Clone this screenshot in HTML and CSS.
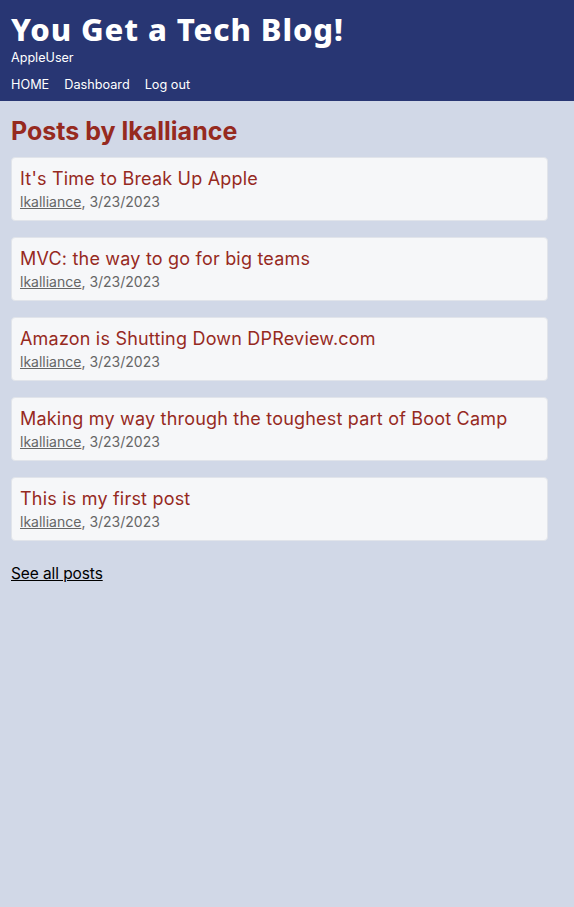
FILE: index.html
```html
<!DOCTYPE html>
<html>
<head>
<meta charset="utf-8">
<link rel="stylesheet" href="styles.css">
</head>
<body>
<header class="site-header">
  <h1 class="site-title">You Get a Tech Blog!</h1>
  <div class="user">AppleUser</div>
  <nav class="nav">
    <a href="#">HOME</a>
    <a href="#">Dashboard</a>
    <a href="#">Log out</a>
  </nav>
</header>
<main class="main">
  <h2 class="page-title">Posts by lkalliance</h2>
  <div class="posts">
    <div class="card">
      <div class="card-title">It's Time to Break Up Apple</div>
      <div class="meta"><a href="#">lkalliance</a>, 3/23/2023</div>
    </div>
    <div class="card">
      <div class="card-title">MVC: the way to go for big teams</div>
      <div class="meta"><a href="#">lkalliance</a>, 3/23/2023</div>
    </div>
    <div class="card">
      <div class="card-title">Amazon is Shutting Down DPReview.com</div>
      <div class="meta"><a href="#">lkalliance</a>, 3/23/2023</div>
    </div>
    <div class="card">
      <div class="card-title">Making my way through the toughest part of Boot Camp</div>
      <div class="meta"><a href="#">lkalliance</a>, 3/23/2023</div>
    </div>
    <div class="card">
      <div class="card-title">This is my first post</div>
      <div class="meta"><a href="#">lkalliance</a>, 3/23/2023</div>
    </div>
  </div>
  <a class="see-all" href="#">See all posts</a>
</main>
</body>
</html>
```
FILE: styles.css
```css
html, body {
  margin: 0;
  padding: 0;
  background: #d1d8e7;
  font-family: Inter, "Noto Sans", sans-serif;
}
.site-header {
  background: #283673;
  color: #fff;
  padding: 12px 11px 0;
  height: 89px;
}
.site-title {
  margin: 0;
  font-family: "Noto Sans", sans-serif;
  font-weight: 800;
  font-size: 31px;
  line-height: 34px;
  letter-spacing: 0.9px;
}
.user {
  font-size: 12.6px;
  line-height: 16px;
  margin-top: 4px;
}
.nav {
  display: flex;
  gap: 15px;
  margin-top: 11px;
}
.nav a {
  color: #fff;
  text-decoration: none;
  font-size: 12.7px;
  line-height: 16px;
}
.main {
  padding: 0 11px;
}
.page-title {
  margin: 0;
  padding-top: 15px;
  font-size: 25px;
  line-height: 30px;
  font-weight: 700;
  color: #962a1f;
}
.posts {
  display: flex;
  flex-direction: column;
  gap: 16px;
  margin-top: 11px;
}
.card {
  background: #f6f7f9;
  border: 1px solid #e1e4ea;
  border-radius: 4px;
  padding: 9px 8px 0;
  height: 53px;
  box-sizing: content-box;
  width: 519px;
}
.card-title {
  color: #962a1f;
  font-size: 18px;
  line-height: 24px;
  letter-spacing: 0.2px;
}
.meta {
  color: #666;
  font-size: 14px;
  line-height: 20px;
  margin-top: 1px;
}
.meta a {
  color: #666;
}
.see-all {
  display: inline-block;
  margin-top: 23px;
  color: #000;
  font-size: 15.5px;
  line-height: 20px;
  letter-spacing: -0.1px;
}
```
